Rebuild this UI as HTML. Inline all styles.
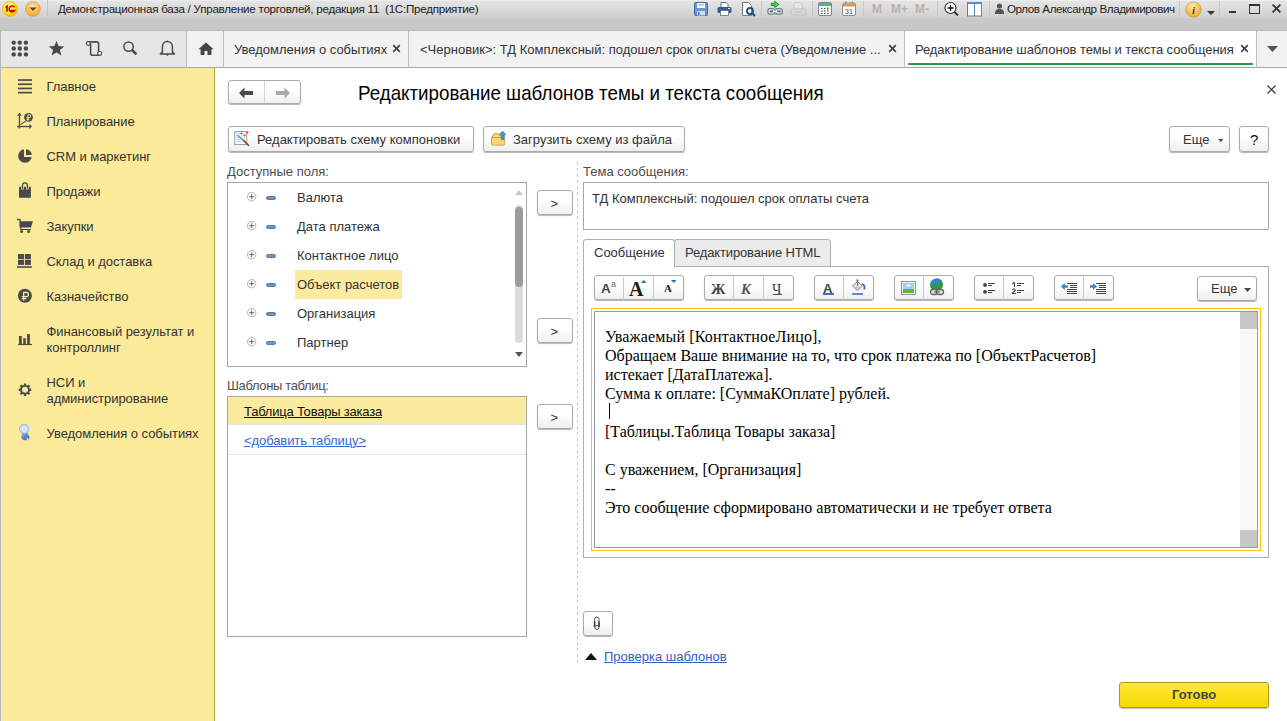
<!DOCTYPE html>
<html><head><meta charset="utf-8">
<style>
*{box-sizing:border-box;margin:0;padding:0}
html,body{width:1287px;height:721px;overflow:hidden;background:#fff;font-family:"Liberation Sans",sans-serif;font-size:13px;color:#333}
div,span,svg{position:absolute}
.t{white-space:nowrap;line-height:1}
#title{left:0;top:0;width:1287px;height:18px;background:linear-gradient(#f0f0f0 0,#e4e4e4 1.5px,#d0d0d0 18px)}
#strip{left:0;top:18px;width:1287px;height:13px;background:linear-gradient(#c9c9c9,#c7c7c7 11.5px,#bcbcbc 12px)}
#tb{left:0;top:31px;width:1287px;height:37px;background:#f2f2f2;border-bottom:1px solid #a8a8a8}
#tbl{left:0;top:31px;width:187px;height:36px;background:#e6e6e6;border-left:1px solid #b8b8b8}
#side{left:0;top:68px;width:215px;height:653px;background:#fbea9a;border-right:1px solid #bfa735;border-left:1px solid #b8b8b8}
.vs{width:1px;background:#b4b4b4}
.menu{left:46.5px;font-size:13px;color:#333;white-space:nowrap;line-height:16px;letter-spacing:-0.05px;margin-top:-1px}
.btn{border:1px solid #ababab;border-radius:3px;background:linear-gradient(#fff 40%,#efefef);box-shadow:0 1px 1px rgba(0,0,0,.3)}
.lbl{font-size:13px;color:#4d4d4d;white-space:nowrap;line-height:1}
.ed{font-family:"Liberation Serif",serif;font-size:16px;color:#000;white-space:nowrap;line-height:19px}
</style></head><body>
<!-- title bar -->
<div id="title"></div>
<div id="strip"></div>
<div id="tb"></div>
<div id="tbl"></div>
<div id="side"></div>
<!-- TITLE BAR CONTENT -->
<svg style="left:2px;top:1px" width="16" height="16" viewBox="0 0 16 16"><defs><radialGradient id="gy" cx="40%" cy="35%" r="70%"><stop offset="0" stop-color="#fff7a0"/><stop offset=".6" stop-color="#ffe01a"/><stop offset="1" stop-color="#f0b800"/></radialGradient></defs><circle cx="8" cy="8" r="7.5" fill="url(#gy)" stroke="#d9b200" stroke-width=".6"/><path d="M3.5 6.2l1.6-1v5.6" stroke="#e00000" stroke-width="1.7" fill="none"/><path d="M12.6 6.2A3 3 0 1 0 12.6 9.6H8.5" stroke="#e00000" stroke-width="1.5" fill="none"/></svg>
<svg style="left:25px;top:1px" width="16" height="16" viewBox="0 0 16 16"><defs><radialGradient id="go" cx="45%" cy="30%" r="70%"><stop offset="0" stop-color="#ffe3a0"/><stop offset="1" stop-color="#f5a623"/></radialGradient></defs><circle cx="8" cy="8" r="7.3" fill="url(#go)" stroke="#c99a3a" stroke-width=".7"/><path d="M4.5 6.5h7L8 10z" fill="#5a4a30"/></svg>
<div class="vs" style="left:47px;top:0;height:17px;background:#c4c4c4"></div>
<div class="t" style="left:58px;top:2.5px;font-size:11.6px;letter-spacing:-0.25px;color:#1a1a1a">Демонстрационная база / Управление торговлей, редакция 11 &nbsp;(1С:Предприятие)</div>
<!-- save -->
<svg style="left:694px;top:2px" width="14" height="14" viewBox="0 0 14 14"><rect x=".5" y=".5" width="13" height="13" rx="1" fill="#6a9ad2" stroke="#3d6aa6"/><rect x="3" y="1" width="8" height="5" fill="#fff"/><rect x="4" y="2.5" width="6" height=".8" fill="#6b8fbf"/><rect x="3" y="9" width="8" height="4.5" fill="#cfd8e3"/><rect x="4" y="10" width="1.5" height="3" fill="#4a7bbf"/></svg>
<!-- print -->
<svg style="left:717px;top:2px" width="15" height="14" viewBox="0 0 15 14"><path d="M4 .5h5l2 2v3H4z" fill="#fff" stroke="#5c6f86"/><rect x=".5" y="5" width="14" height="6" rx="1.5" fill="#2f5f8f"/><rect x="3.5" y="8.5" width="8" height="5" fill="#fff" stroke="#5c6f86" stroke-width=".8"/><rect x="11" y="6" width="2" height="1" fill="#fff"/></svg>
<!-- preview -->
<svg style="left:741px;top:1px" width="15" height="16" viewBox="0 0 15 16"><path d="M1.5 1.5h6l3 3v10h-9z" fill="#fff" stroke="#6d7d90"/><circle cx="9" cy="10" r="3" fill="none" stroke="#1e4f7f" stroke-width="1.8"/><path d="M11 12l3 3" stroke="#1e4f7f" stroke-width="2"/></svg>
<div class="vs" style="left:761px;top:1px;height:16px;background:#c8c8c8"></div>
<!-- link green -->
<svg style="left:762px;top:0px" width="26" height="18" viewBox="762 0 26 18"><rect x="767.9" y="8.6" width="6.6" height="5.6" rx="1.8" fill="#f4f6f8" stroke="#6f7c88" stroke-width="1.3"/><rect x="775.6" y="8.6" width="6.6" height="5.6" rx="1.8" fill="#f4f6f8" stroke="#6f7c88" stroke-width="1.3"/><rect x="769.6" y="10.4" width="3.4" height="1.9" fill="#5d6872"/><rect x="777.2" y="10.4" width="3.4" height="1.9" fill="#5d6872"/><rect x="773.2" y="10.6" width="3.8" height="1.6" fill="#fff"/><path d="M771.3 3.3h3.4V1.3l4.2 3.1-4.2 3.1v-2H771.3z" fill="#22ee22" stroke="#1e7a1e" stroke-width=".8" stroke-linejoin="round"/></svg>
<!-- disabled print -->
<svg style="left:790px;top:1px" width="17" height="16" viewBox="0 0 17 16"><path d="M4 1.5h6l2.5 2.5v4H4z" fill="#e4e7ea" stroke="#c5cbd1"/><rect x="1" y="8" width="15" height="6" rx="2" fill="none" stroke="#c5cbd1" stroke-width="1.4"/><path d="M5 11h7" stroke="#c5cbd1" stroke-width="1.4"/></svg>
<div class="vs" style="left:812px;top:1px;height:16px;background:#c8c8c8"></div>
<!-- calc -->
<svg style="left:818px;top:2px" width="14" height="14" viewBox="0 0 14 14"><rect x=".5" y=".5" width="13" height="13" rx="1.5" fill="#f4f6f8" stroke="#7b8794"/><rect x="1" y="1" width="12" height="3" fill="#4fc24f"/><g fill="#555"><rect x="3" y="6" width="1.5" height="1"/><rect x="6" y="6" width="1.5" height="1"/><rect x="3" y="8.5" width="1.5" height="1"/><rect x="6" y="8.5" width="1.5" height="1"/><rect x="3" y="11" width="1.5" height="1"/><rect x="6" y="11" width="1.5" height="1"/><rect x="9" y="8.5" width="1.5" height="1"/><rect x="9" y="11" width="1.5" height="1"/></g><rect x="9" y="5.5" width="1.5" height="2" fill="#e22"/></svg>
<!-- calendar -->
<svg style="left:842px;top:1px" width="14" height="15" viewBox="0 0 14 15"><rect x=".5" y="2" width="13" height="12.5" rx="1.5" fill="#fff" stroke="#8a8f96"/><rect x="1" y="2.5" width="12" height="3" fill="#e8924a"/><rect x="3" y=".5" width="1.2" height="3" fill="#8a8f96"/><rect x="9.8" y=".5" width="1.2" height="3" fill="#8a8f96"/><text x="7" y="12.8" font-size="7" text-anchor="middle" font-family="Liberation Sans" fill="#444">31</text></svg>
<div class="vs" style="left:863px;top:1px;height:16px;background:#c8c8c8"></div>
<div class="t" style="left:872px;top:3px;font-size:12px;font-weight:bold;color:#bcb0a4">M</div>
<div class="t" style="left:891px;top:3px;font-size:12px;font-weight:bold;color:#bcb0a4">M+</div>
<div class="t" style="left:915px;top:3px;font-size:12px;font-weight:bold;color:#bcb0a4">M-</div>
<div class="vs" style="left:937px;top:1px;height:16px;background:#c8c8c8"></div>
<!-- zoom -->
<svg style="left:944px;top:1px" width="15" height="16" viewBox="0 0 15 16"><circle cx="6.5" cy="7" r="5.5" fill="#fff" stroke="#333" stroke-width="1.2"/><path d="M6.5 4v6M3.5 7h6" stroke="#111" stroke-width="1.3"/><path d="M10.5 11l3.5 3.5" stroke="#333" stroke-width="1.8"/></svg>
<!-- panel -->
<svg style="left:967px;top:1px" width="15" height="16" viewBox="0 0 15 16"><rect x=".5" y="1.5" width="14" height="13.5" fill="#fff" stroke="#5a7fae"/><rect x="1" y="1" width="13" height="2" fill="#4a90e2"/><path d="M7.5 3v12" stroke="#5a7fae"/></svg>
<div class="vs" style="left:989px;top:1px;height:16px;background:#c8c8c8"></div>
<svg style="left:995px;top:3px" width="9" height="11" viewBox="0 0 9 11"><circle cx="4.5" cy="3" r="2.6" fill="#555"/><path d="M0 11c0-4 1.5-5 4.5-5s4.5 1 4.5 5z" fill="#555"/></svg>
<div class="t" style="left:1007px;top:2.5px;font-size:11.6px;letter-spacing:-0.41px;color:#222">Орлов Александр Владимирович</div>
<div class="vs" style="left:1179px;top:1px;height:16px;background:#c8c8c8"></div>
<svg style="left:1184.5px;top:0.5px" width="17" height="17" viewBox="0 0 17 17"><defs><radialGradient id="gi" cx="45%" cy="30%" r="70%"><stop offset="0" stop-color="#ffe9a8"/><stop offset="1" stop-color="#f0a928"/></radialGradient></defs><circle cx="8.5" cy="8.5" r="7.7" fill="url(#gi)" stroke="#c89a3e" stroke-width=".7"/><text x="8.5" y="13" font-size="11" font-style="italic" font-weight="bold" text-anchor="middle" font-family="Liberation Serif" fill="#444">i</text></svg>
<svg style="left:1207px;top:11px" width="8" height="4" viewBox="0 0 8 4"><path d="M0 0h8L4 4z" fill="#333"/></svg>
<div class="vs" style="left:1219px;top:1px;height:16px;background:#c8c8c8"></div>
<div style="left:1229px;top:11px;width:7px;height:2px;background:#333"></div>
<div style="left:1249px;top:4px;width:11px;height:10px;border:1.3px solid #333;border-top-width:2.2px"></div>
<svg style="left:1272px;top:4px" width="9" height="9" viewBox="0 0 9 9"><path d="M.6 .6l7.8 7.8M8.4 .6L.6 8.4" stroke="#333" stroke-width="1.8"/></svg>
<!-- TOOLBAR ROW -->
<svg style="left:11px;top:40px" width="18" height="17" viewBox="0 0 18 17"><g fill="#4a4a4a"><circle cx="2.7" cy="2.6" r="2.2"/><circle cx="8.8" cy="2.6" r="2.2"/><circle cx="14.9" cy="2.6" r="2.2"/><circle cx="2.7" cy="8.5" r="2.2"/><circle cx="8.8" cy="8.5" r="2.2"/><circle cx="14.9" cy="8.5" r="2.2"/><circle cx="2.7" cy="14.4" r="2.2"/><circle cx="8.8" cy="14.4" r="2.2"/><circle cx="14.9" cy="14.4" r="2.2"/></g></svg>
<svg style="left:48px;top:40px" width="17" height="17" viewBox="0 0 17 17"><path d="M8.5 .8l2.1 5.3 5.7.3-4.4 3.6 1.5 5.6-4.9-3.2-4.9 3.2 1.5-5.6L.7 6.4l5.7-.3z" fill="#4a4a4a"/></svg>
<svg style="left:80px;top:36px" width="26" height="26" viewBox="80 36 26 26"><path d="M88.3 41.9H96.6a2 2 0 0 1 2 2V53.4M90.6 43.5V53.2a2 2 0 0 0 2 2H99.6" fill="none" stroke="#4a4a4a" stroke-width="1.6"/><circle cx="88.3" cy="43.5" r="1.9" fill="#fff" stroke="#4a4a4a" stroke-width="1.2"/><circle cx="99.6" cy="53.4" r="1.9" fill="#fff" stroke="#4a4a4a" stroke-width="1.2"/></svg>
<svg style="left:118px;top:38px" width="24" height="22" viewBox="118 38 24 22"><circle cx="128.6" cy="46.6" r="4.7" fill="none" stroke="#4a4a4a" stroke-width="1.5"/><path d="M132.2 50.2l4.2 4.2" stroke="#4a4a4a" stroke-width="2.6"/></svg>
<svg style="left:156px;top:38px" width="22" height="22" viewBox="156 38 22 22"><path d="M167.4 41.6c-3 0-5 2.3-5 5.3v5.2l-2 1.8h14l-2-1.8v-5.2c0-3-2-5.3-5-5.3z" fill="none" stroke="#4a4a4a" stroke-width="1.5" stroke-linejoin="round"/><path d="M166.3 41.8l1.1-1.5 1.1 1.5z" fill="#4a4a4a"/><path d="M165.7 54.6h3.4l-1.7 1.5z" fill="#4a4a4a"/></svg>
<div class="vs" style="left:186px;top:31px;height:36px;background:#c0c0c0"></div>
<svg style="left:198px;top:42px" width="16" height="13" viewBox="0 0 16 13"><path d="M8 .5L.3 7.3h2.3V13h3.9V9h3V13h3.9V7.3h2.3z" fill="#444"/></svg>
<div class="vs" style="left:223px;top:31px;height:36px;background:#c0c0c0"></div>
<div class="t" style="left:234px;top:43px;font-size:13px;color:#333">Уведомления о событиях</div>
<svg style="left:392px;top:44px" width="9" height="9" viewBox="0 0 9 9"><path d="M1.2 1.2l6.6 6.6M7.8 1.2L1.2 7.8" stroke="#444" stroke-width="1.7"/></svg>
<div class="vs" style="left:408px;top:31px;height:36px;background:#c0c0c0"></div>
<div class="t" style="left:420px;top:43px;font-size:13px;color:#333">&lt;Черновик&gt;: ТД Комплексный: подошел срок оплаты счета (Уведомление ...</div>
<svg style="left:888px;top:44px" width="9" height="9" viewBox="0 0 9 9"><path d="M1.2 1.2l6.6 6.6M7.8 1.2L1.2 7.8" stroke="#444" stroke-width="1.7"/></svg>
<div class="vs" style="left:904px;top:31px;height:36px;background:#c0c0c0"></div>
<div style="left:905px;top:31px;width:351px;height:36px;background:#fff"></div>
<div class="t" style="left:915px;top:43px;font-size:13px;letter-spacing:-0.087px;color:#333">Редактирование шаблонов темы и текста сообщения</div>
<svg style="left:1240px;top:44px" width="9" height="9" viewBox="0 0 9 9"><path d="M1.2 1.2l6.6 6.6M7.8 1.2L1.2 7.8" stroke="#444" stroke-width="1.7"/></svg>
<div style="left:908px;top:63px;width:345px;height:2px;background:#2c9a4a"></div>
<div class="vs" style="left:1256px;top:31px;height:36px;background:#c0c0c0"></div>
<svg style="left:1267px;top:46px" width="11" height="6" viewBox="0 0 11 6"><path d="M0 0h11L5.5 6z" fill="#555"/></svg>
<!-- SIDEBAR -->
<svg style="left:18px;top:79px" width="15" height="15" viewBox="0 0 15 15"><g fill="#4a4a4a"><rect x="0" y=".2" width="14" height="1.7"/><rect x="0" y="4.4" width="14" height="1.7"/><rect x="0" y="8.6" width="14" height="1.7"/><rect x="0" y="12.8" width="14" height="1.7"/></g></svg>
<div class="menu t" style="top:80px">Главное</div>
<svg style="left:14px;top:110px" width="22" height="22" viewBox="14 110 22 22"><g fill="#4a4a4a"><rect x="18.8" y="115" width="1.3" height="13.5"/><rect x="17" y="125.9" width="13" height="1.3"/><path d="M19.45 112.8l2.4 3h-4.8z"/><path d="M32.1 126.55l-2.8-2.5v5z"/><circle cx="28.5" cy="117.3" r="4.4"/></g><path d="M20.5 124.3h1v-.8h1v-.7h1v-.6h1.2v-.5h1.3" fill="none" stroke="#4a4a4a" stroke-width=".9"/><path d="M27.9 121V114.6h1.4a1.5 1.5 0 0 1 0 3H26.5M26.5 119.3h2.8" fill="none" stroke="#fbea9a" stroke-width="1"/></svg>
<div class="menu t" style="top:115px">Планирование</div>
<svg style="left:17px;top:148px" width="16" height="16" viewBox="0 0 16 16"><path d="M7 1.3A6.8 6.8 0 1 0 14.7 9H7z" fill="#4a4a4a"/><path d="M9 1.2v5.8h5.8A6.2 6.2 0 0 0 9 1.2z" fill="#4a4a4a"/></svg>
<div class="menu t" style="top:150px">CRM и маркетинг</div>
<svg style="left:14px;top:178px" width="22" height="22" viewBox="14 178 22 22"><path d="M19 186.8H21V188.4a1.4 1.4 0 0 0 2.8 0V186.8H26V188.4a1.4 1.4 0 0 0 2.8 0V186.8H30.9V197.8H19z" fill="#4a4a4a"/><path d="M22.4 189.2V185.4a2.5 2.5 0 0 1 5 0V189.2" fill="none" stroke="#4a4a4a" stroke-width="1.3"/></svg>
<div class="menu t" style="top:185px">Продажи</div>
<svg style="left:14px;top:214px" width="22" height="22" viewBox="14 214 22 22"><g fill="#4a4a4a"><rect x="17" y="218.9" width="3.4" height="1.3"/><path d="M19.4 218.9h1.1l.2 2.4H32.9l-1.9 6.2H19.5z"/><path d="M20.2 227.2h1.2v1.7h9.6v1.2H20.2z"/><circle cx="21.6" cy="231.4" r="1.5"/><circle cx="28.6" cy="231.4" r="1.5"/></g></svg>
<div class="menu t" style="top:220px">Закупки</div>
<svg style="left:14px;top:250px" width="22" height="22" viewBox="14 250 22 22"><g fill="#4a4a4a"><rect x="18" y="254" width="6" height="5.1"/><rect x="24.9" y="254" width="6" height="5.1"/><rect x="18" y="259.8" width="6" height="5.1"/><rect x="24.9" y="259.8" width="6" height="5.1"/><rect x="17.1" y="266.2" width="14.7" height="1.6"/></g></svg>
<div class="menu t" style="top:255px">Склад и доставка</div>
<svg style="left:14px;top:285px" width="22" height="22" viewBox="14 285 22 22"><circle cx="24.9" cy="295.8" r="7" fill="#4a4a4a"/><path d="M23.7 300.6V292.3h2.6a2.15 2.15 0 0 1 0 4.3H21.8M21.8 298.6h4.6" stroke="#fbea9a" stroke-width="1.3" fill="none"/></svg>
<div class="menu t" style="top:290px">Казначейство</div>
<svg style="left:14px;top:328px" width="22" height="22" viewBox="14 328 22 22"><g fill="#4a4a4a"><rect x="19" y="336" width="2.8" height="8.5"/><rect x="23.2" y="338.2" width="2.6" height="6.3"/><rect x="27.1" y="334.1" width="2.8" height="10.4"/><rect x="18" y="343.9" width="14" height="1.2"/></g></svg>
<div class="menu" style="top:325px">Финансовый результат и<br>контроллинг</div>
<svg style="left:14px;top:379px" width="22" height="22" viewBox="14 379 22 22"><g fill="#4a4a4a" transform="translate(25 389.8)"><rect x="-1.1" y="-6.3" width="2.2" height="12.6"/><rect x="-1.1" y="-6.3" width="2.2" height="12.6" transform="rotate(45)"/><rect x="-1.1" y="-6.3" width="2.2" height="12.6" transform="rotate(90)"/><rect x="-1.1" y="-6.3" width="2.2" height="12.6" transform="rotate(135)"/><circle r="4.9"/></g><circle cx="25" cy="389.8" r="3" fill="#fbea9a"/></svg>
<div class="menu" style="top:376px">НСИ и<br>администрирование</div>
<svg style="left:14px;top:422px" width="22" height="22" viewBox="14 422 22 22"><defs><linearGradient id="nb" x1="0" y1="0" x2="1" y2="1"><stop offset="0" stop-color="#8fb2e8"/><stop offset="1" stop-color="#2f5fb0"/></linearGradient></defs><path d="M22 432.5c1.5-.5 4-.5 5.5 0 .5 2 1 3 2 4.5.3 1.5-1 3.3-4 3.3s-4.5-1.5-4.3-3c.6-1.5.8-3 .8-4.8z" fill="url(#nb)"/><circle cx="27.5" cy="439" r=".9" fill="#fff"/><circle cx="24.1" cy="429" r="4.7" fill="#c3d6f2" stroke="#94b3e0" stroke-width=".8"/><circle cx="24.3" cy="429" r="2.1" fill="none" stroke="#fff" stroke-width="1"/></svg>
<div class="menu t" style="top:427px">Уведомления о событиях</div>
<!-- MAIN HEADER -->
<div class="btn" style="left:228px;top:80px;width:73px;height:24px"></div>
<div style="left:264px;top:81px;width:1px;height:22px;background:#d4d4d4"></div>
<svg style="left:239px;top:86.5px" width="15" height="12" viewBox="0 0 15 12"><path d="M0 6L5.5 .5v3.6H14v3.8H5.5v3.6z" fill="#4a4a4a"/></svg>
<svg style="left:275px;top:86.5px" width="15" height="12" viewBox="0 0 15 12"><path d="M15 6L9.5 .5v3.6H1v3.8h8.5v3.6z" fill="#aaa"/></svg>
<div class="t" style="left:358px;top:82.5px;font-size:20.3px;letter-spacing:0px;color:#000;transform:scaleX(0.925);transform-origin:0 0">Редактирование шаблонов темы и текста сообщения</div>
<svg style="left:1267px;top:85px" width="9" height="9" viewBox="0 0 9 9"><path d="M.5 .5l8 8M8.5 .5l-8 8" stroke="#333" stroke-width="1.2"/></svg>
<!-- command bar -->
<div class="btn" style="left:228px;top:126px;width:246px;height:26px"></div>
<svg style="left:230px;top:126px" width="30" height="26" viewBox="230 126 30 26"><rect x="234.7" y="131.5" width="12" height="13" fill="#f6f8fb" stroke="#8ea2b8" stroke-width="1"/><path d="M236.3 133.5h4M236.3 135.5h3M236.3 137.5h2.5M236.3 139.5h4M236.3 141.5h4.5" stroke="#b5c2d0" stroke-width=".9"/><path d="M238.2 135.8l5.3 4.6" stroke="#4aa6e8" stroke-width="1.7" stroke-linecap="round"/><path d="M243.3 140.2l5.7 5.6" stroke="#7f5a10" stroke-width="1.7"/><path d="M241.6 131.8l.55 1.15 1.15.55-1.15.55-.55 1.15-.55-1.15-1.15-.55 1.15-.55z" fill="#f04a1a"/><path d="M244.5 133.8l.55 1.15 1.15.55-1.15.55-.55 1.15-.55-1.15-1.15-.55 1.15-.55z" fill="#f04a1a"/><path d="M247.5 130.8l.55 1.15 1.15.55-1.15.55-.55 1.15-.55-1.15-1.15-.55 1.15-.55z" fill="#f04a1a"/></svg>
<div class="t" style="left:257px;top:133px;font-size:13px;color:#333">Редактировать схему компоновки</div>
<div class="btn" style="left:483px;top:126px;width:202px;height:26px"></div>
<svg style="left:486px;top:126px" width="26" height="26" viewBox="486 126 26 26"><path d="M491.6 137.3l2.6-3.6h4.3l1.2 1.6h4.6v9c0 .5-.3.8-.8.8h-11.1c-.5 0-.8-.3-.8-.8z" fill="#f8d878" stroke="#cf963a" stroke-width="1"/><path d="M491.6 137.6h12.7" stroke="#cf963a" stroke-width="1"/><path d="M492.2 138.1h11.6v6.3h-11.6z" fill="#f7d67a"/><path d="M502.6 131l3.3 3.7h-1.9v4.8h-2.8v-4.8h-1.9z" fill="#2f9be0" stroke="#1a78c0" stroke-width=".6"/></svg>
<div class="t" style="left:513px;top:133px;font-size:13px;color:#333">Загрузить схему из файла</div>
<div class="btn" style="left:1169px;top:126px;width:61px;height:26px"></div>
<div class="t" style="left:1183px;top:133px;font-size:13px;color:#333">Еще</div>
<svg style="left:1218px;top:139px" width="6" height="3" viewBox="0 0 6 3"><path d="M0 0h5.5L2.75 3z" fill="#444"/></svg>
<div class="btn" style="left:1239px;top:126px;width:30px;height:26px"></div>
<div class="t" style="left:1250px;top:132px;font-size:15px;color:#111">?</div>
<!-- left column -->
<div class="lbl" style="left:227px;top:165px">Доступные поля:</div>
<div style="left:227px;top:182px;width:300px;height:185px;border:1px solid #a6a6a6;background:#fff"></div>
<div style="left:295px;top:270px;width:107px;height:29px;background:#fbeb9e"></div>
<svg style="left:247px;top:192px" width="10" height="10" viewBox="0 0 10 10"><circle cx="4.7" cy="4.7" r="4.2" fill="#fff" stroke="#a8a8a8" stroke-width=".9"/><path d="M4.7 2.2v5M2.2 4.7h5" stroke="#666" stroke-width="1"/></svg>
<div style="left:266px;top:196px;width:10px;height:4px;border-radius:2px;background:#6f95b8;border:1px solid #5a7fa3"></div>
<div class="t" style="left:297px;top:191px;font-size:13px;color:#333">Валюта</div>
<svg style="left:247px;top:221px" width="10" height="10" viewBox="0 0 10 10"><circle cx="4.7" cy="4.7" r="4.2" fill="#fff" stroke="#a8a8a8" stroke-width=".9"/><path d="M4.7 2.2v5M2.2 4.7h5" stroke="#666" stroke-width="1"/></svg>
<div style="left:266px;top:225px;width:10px;height:4px;border-radius:2px;background:#6f95b8;border:1px solid #5a7fa3"></div>
<div class="t" style="left:297px;top:220px;font-size:13px;color:#333">Дата платежа</div>
<svg style="left:247px;top:250px" width="10" height="10" viewBox="0 0 10 10"><circle cx="4.7" cy="4.7" r="4.2" fill="#fff" stroke="#a8a8a8" stroke-width=".9"/><path d="M4.7 2.2v5M2.2 4.7h5" stroke="#666" stroke-width="1"/></svg>
<div style="left:266px;top:254px;width:10px;height:4px;border-radius:2px;background:#6f95b8;border:1px solid #5a7fa3"></div>
<div class="t" style="left:297px;top:249px;font-size:13px;color:#333">Контактное лицо</div>
<svg style="left:247px;top:279px" width="10" height="10" viewBox="0 0 10 10"><circle cx="4.7" cy="4.7" r="4.2" fill="#fff" stroke="#a8a8a8" stroke-width=".9"/><path d="M4.7 2.2v5M2.2 4.7h5" stroke="#666" stroke-width="1"/></svg>
<div style="left:266px;top:283px;width:10px;height:4px;border-radius:2px;background:#6f95b8;border:1px solid #5a7fa3"></div>
<div class="t" style="left:297px;top:278px;font-size:13px;color:#333">Объект расчетов</div>
<svg style="left:247px;top:308px" width="10" height="10" viewBox="0 0 10 10"><circle cx="4.7" cy="4.7" r="4.2" fill="#fff" stroke="#a8a8a8" stroke-width=".9"/><path d="M4.7 2.2v5M2.2 4.7h5" stroke="#666" stroke-width="1"/></svg>
<div style="left:266px;top:312px;width:10px;height:4px;border-radius:2px;background:#6f95b8;border:1px solid #5a7fa3"></div>
<div class="t" style="left:297px;top:307px;font-size:13px;color:#333">Организация</div>
<svg style="left:247px;top:337px" width="10" height="10" viewBox="0 0 10 10"><circle cx="4.7" cy="4.7" r="4.2" fill="#fff" stroke="#a8a8a8" stroke-width=".9"/><path d="M4.7 2.2v5M2.2 4.7h5" stroke="#666" stroke-width="1"/></svg>
<div style="left:266px;top:341px;width:10px;height:4px;border-radius:2px;background:#6f95b8;border:1px solid #5a7fa3"></div>
<div class="t" style="left:297px;top:336px;font-size:13px;color:#333">Партнер</div>
<!-- tree scrollbar -->
<svg style="left:515px;top:190px" width="8" height="6" viewBox="0 0 8 6"><path d="M0 5h8L4 0z" fill="#c8c8c8"/></svg>
<div style="left:515px;top:205px;width:8px;height:138px;border-radius:4px;background:#dcdcdc"></div>
<div style="left:515px;top:207px;width:8px;height:80px;border-radius:4px;background:#9b9b9b"></div>
<svg style="left:515px;top:352px" width="8" height="6" viewBox="0 0 8 6"><path d="M0 0h8L4 5z" fill="#555"/></svg>
<!-- > buttons -->
<div class="btn" style="left:537px;top:190px;width:36px;height:25px"></div>
<div class="t" style="left:550.5px;top:196.5px;font-size:13px;color:#333">&gt;</div>
<div class="btn" style="left:537px;top:318px;width:36px;height:25px"></div>
<div class="t" style="left:550.5px;top:324.5px;font-size:13px;color:#333">&gt;</div>
<div class="btn" style="left:537px;top:404px;width:36px;height:25px"></div>
<div class="t" style="left:550.5px;top:410.5px;font-size:13px;color:#333">&gt;</div>
<!-- tables -->
<div class="lbl" style="left:227px;top:378.5px;letter-spacing:-0.36px">Шаблоны таблиц:</div>
<div style="left:227px;top:396px;width:300px;height:241px;border:1px solid #a6a6a6;background:#fff"></div>
<div style="left:228px;top:397px;width:298px;height:27px;background:#fbeb9e"></div>
<div style="left:228px;top:424px;width:298px;height:1px;background:#e4e4e4"></div>
<div style="left:228px;top:454px;width:298px;height:1px;background:#e4e4e4"></div>
<div class="t" style="left:244px;top:405px;font-size:13px;letter-spacing:-0.21px;color:#111;text-decoration:underline">Таблица Товары заказа</div>
<div class="t" style="left:244px;top:434px;font-size:13px;letter-spacing:-0.09px;color:#3468d4;text-decoration:underline">&lt;добавить таблицу&gt;</div>
<!-- dashed separator -->
<div style="left:577px;top:162px;width:1px;height:502px;background:repeating-linear-gradient(#c8c8c8 0 3px,transparent 3px 6px)"></div>
<!-- right column -->
<div class="lbl" style="left:583px;top:165px">Тема сообщения:</div>
<div style="left:583px;top:182px;width:686px;height:48px;border:1px solid #a6a6a6;background:#fff"></div>
<div class="t" style="left:592px;top:192px;font-size:13px;color:#333">ТД Комплексный: подошел срок оплаты счета</div>
<!-- tabs -->
<div style="left:583px;top:266px;width:686px;height:292px;border:1px solid #b0b0b0;background:#fff"></div>
<div style="left:674px;top:239px;width:157px;height:28px;border:1px solid #b0b0b0;border-radius:3px 3px 0 0;background:#ececec"></div>
<div style="left:583px;top:239px;width:92px;height:28px;border:1px solid #b0b0b0;border-bottom:none;border-radius:3px 3px 0 0;background:#fff"></div>
<div class="t" style="left:594px;top:246px;font-size:13px;color:#333">Сообщение</div>
<div class="t" style="left:685px;top:246px;font-size:13px;letter-spacing:-0.14px;color:#333">Редактирование HTML</div>
<!-- format toolbar -->
<div class="btn" style="left:594px;top:275px;width:90px;height:25px"></div>
<div style="left:623px;top:277px;width:1px;height:23px;background:#c8c8c8"></div>
<div style="left:653px;top:277px;width:1px;height:23px;background:#c8c8c8"></div>
<div class="btn" style="left:704px;top:275px;width:90px;height:25px"></div>
<div style="left:733px;top:277px;width:1px;height:23px;background:#c8c8c8"></div>
<div style="left:763px;top:277px;width:1px;height:23px;background:#c8c8c8"></div>
<div class="btn" style="left:814px;top:275px;width:60px;height:25px"></div>
<div style="left:843px;top:277px;width:1px;height:23px;background:#c8c8c8"></div>
<div class="btn" style="left:894px;top:275px;width:60px;height:25px"></div>
<div style="left:923px;top:277px;width:1px;height:23px;background:#c8c8c8"></div>
<div class="btn" style="left:974px;top:275px;width:60px;height:25px"></div>
<div style="left:1003px;top:277px;width:1px;height:23px;background:#c8c8c8"></div>
<div class="btn" style="left:1054px;top:275px;width:60px;height:25px"></div>
<div style="left:1083px;top:277px;width:1px;height:23px;background:#c8c8c8"></div>
<div class="btn" style="left:1197px;top:276px;width:60px;height:25px"></div>
<div class="t" style="left:1211px;top:282px;font-size:13px;color:#333">Еще</div>
<svg style="left:1244px;top:288px" width="7" height="4" viewBox="0 0 7 4"><path d="M0 0h7L3.5 4z" fill="#444"/></svg>
<!-- toolbar icons -->
<div class="t" style="left:601px;top:282px;font-size:13.5px;font-weight:bold;color:#444">A</div>
<div class="t" style="left:611px;top:280px;font-size:9px;color:#666">a</div>
<div class="t" style="left:629px;top:279px;font-size:20px;font-weight:bold;font-family:'Liberation Serif',serif;color:#1a1a1a">A</div>
<svg style="left:641px;top:280px" width="6" height="3" viewBox="0 0 6 3"><path d="M0 3h5.5L2.75 0z" fill="#2a6f98"/></svg>
<div class="t" style="left:664px;top:283px;font-size:11px;font-weight:bold;font-family:'Liberation Serif',serif;color:#1a1a1a">A</div>
<svg style="left:671px;top:280px" width="6" height="3" viewBox="0 0 6 3"><path d="M0 0h5.5L2.75 3z" fill="#2a6f98"/></svg>
<div class="t" style="left:711px;top:282px;font-size:14.5px;font-weight:bold;font-family:'Liberation Serif',serif;color:#444">Ж</div>
<div class="t" style="left:741px;top:282px;font-size:14.5px;font-style:italic;font-weight:bold;font-family:'Liberation Serif',serif;color:#555">К</div>
<div class="t" style="left:772px;top:282px;font-size:14.5px;font-family:'Liberation Serif',serif;color:#444">Ч</div>
<div style="left:773px;top:294px;width:9px;height:1px;background:#555"></div>
<div class="t" style="left:823px;top:282px;font-size:13px;font-weight:bold;color:#444">A</div>
<div style="left:823px;top:293px;width:11px;height:2px;background:#3a6fd0"></div>
<svg style="left:851px;top:279px" width="16" height="17" viewBox="0 0 16 17"><path d="M1.5 7l5-4.5 5 4.5-5 4.5z" fill="#e8e8e8" stroke="#888" stroke-width="1"/><path d="M2.5 7.5l4 3.5 4-3.5z" fill="#c8c8c8"/><path d="M6.5 1v6" stroke="#a07830" stroke-width="1.1"/><circle cx="6.5" cy="1.3" r="1" fill="none" stroke="#777" stroke-width=".7"/><path d="M11 5c2.5.8 3 3 2.2 5.5" stroke="#2a6fd6" stroke-width="1.8" fill="none"/><rect x="1" y="14.2" width="11" height="1.6" fill="#3a6fd0"/></svg>
<svg style="left:901px;top:281px" width="16" height="15" viewBox="0 0 16 15"><rect x=".5" y=".5" width="14" height="13" fill="#eef2f6" stroke="#8797a8"/><rect x="2" y="2" width="11" height="10" fill="#9fd2f2"/><rect x="2" y="8" width="11" height="4" fill="#6cae3a"/><ellipse cx="7.5" cy="4.5" rx="2.5" ry="1" fill="#fff"/></svg>
<svg style="left:929px;top:278px" width="18" height="19" viewBox="0 0 18 19"><circle cx="7.5" cy="7" r="6.5" fill="#2e9a3e"/><path d="M1.5 5.5a6.5 6.5 0 0 1 12-1.5c-2 .5-3 2-5 1.5s-3 1-4 2z" fill="#3a7fd0"/><rect x="1.5" y="11.5" width="7" height="5" rx="2.5" fill="#e8e8e8" stroke="#666" stroke-width="1.3"/><rect x="7.5" y="11.5" width="7" height="5" rx="2.5" fill="#e8e8e8" stroke="#666" stroke-width="1.3"/><path d="M5 14h6" stroke="#666" stroke-width="1.3"/></svg>
<svg style="left:975px;top:275px" width="140" height="27" viewBox="975 275 140 27">
<g fill="#444"><circle cx="985" cy="285" r="1.9"/><circle cx="985" cy="291.8" r="1.9"/>
<rect x="988" y="283" width="7" height="1"/><rect x="988" y="285" width="4" height="1"/><rect x="988" y="290" width="7" height="1"/><rect x="988" y="292" width="4" height="1"/>
<rect x="1017" y="283" width="7" height="1"/><rect x="1017" y="285" width="4" height="1"/><rect x="1017" y="290" width="7" height="1"/><rect x="1017" y="292" width="4" height="1"/>
<path d="M1012.2 283.3l1.8-1.3h1v4.9h-1.1v-3.5l-1.7 1z"/>
<path d="M1012 294v-.9c.3-.8 1-1.3 1.8-1.8.6-.4.9-.7.9-1.1 0-.4-.3-.7-.8-.7s-.8.3-.9.8l-1-.1c.1-1 .8-1.6 1.9-1.6 1.1 0 1.9.6 1.9 1.6 0 .7-.4 1.2-1.2 1.7-.6.4-1 .7-1.2 1.1h2.5v1z"/>
<rect x="1067" y="283" width="10" height="1"/><rect x="1070" y="285" width="7" height="1"/><rect x="1070" y="287" width="7" height="1"/><rect x="1067" y="289" width="10" height="1"/><rect x="1067" y="291" width="10" height="1"/><rect x="1067" y="293" width="10" height="1"/>
<rect x="1096" y="283" width="10" height="1"/><rect x="1099" y="285" width="7" height="1"/><rect x="1099" y="287" width="7" height="1"/><rect x="1096" y="289" width="10" height="1"/><rect x="1096" y="291" width="10" height="1"/><rect x="1096" y="293" width="10" height="1"/>
</g>
<path d="M1060.8 286.5l4-3.5v2.3h3v2.4h-3v2.3z" fill="#3a86d8"/>
<path d="M1097 286.5l-4-3.5v2.3h-3v2.4h3v2.3z" fill="#3a86d8"/>
</svg>
<!-- editor -->
<div style="left:591px;top:308px;width:670px;height:243px;border:1px solid #fcc419"></div>
<div style="left:594px;top:311px;width:664px;height:237px;border:1px solid #9a9a9a;background:#fff"></div>
<div style="left:1240px;top:312px;width:17px;height:235px;background:#f8f8f8"></div>
<div style="left:1240px;top:312px;width:17px;height:17px;background:#c8c8c8"></div>
<div style="left:1240px;top:530px;width:17px;height:17px;background:#c8c8c8"></div>
<div class="ed" style="left:605px;top:327px"><span style="position:static;letter-spacing:0.16px">Уважаемый [КонтактноеЛицо],</span><br>Обращаем Ваше внимание на то, что срок платежа по [ОбъектРасчетов]<br>истекает [ДатаПлатежа].<br>Сумма к оплате: [СуммаКОплате] рублей.<br><br>[Таблицы.Таблица Товары заказа]<br><br>С уважением, [Организация]<br>--<br>Это сообщение сформировано автоматически и не требует ответа</div>
<div style="left:609px;top:403px;width:1px;height:16px;background:#000"></div>
<!-- bottom -->
<div class="btn" style="left:583px;top:611px;width:30px;height:25px"></div>
<svg style="left:590px;top:614px" width="14" height="18" viewBox="590 614 14 18"><path d="M594.6 627V619.3a2.2 2.2 0 0 1 4.4 0V627" fill="none" stroke="#555" stroke-width="1"/><path d="M594.6 621.5V627M599 621.5V627" stroke="#444" stroke-width="1.6"/><circle cx="596.8" cy="627.4" r="2" fill="#fff" stroke="#444" stroke-width="1"/></svg>
<svg style="left:585px;top:653px" width="12" height="7" viewBox="0 0 12 7"><path d="M0 7h12L6 0z" fill="#111"/></svg>
<div class="t" style="left:604px;top:650px;font-size:13px;color:#2d62c4;text-decoration:underline">Проверка шаблонов</div>
<div style="left:1119px;top:682px;width:150px;height:26px;border:1px solid #b39b10;border-radius:3px;background:linear-gradient(#ffe83c,#f7d800);box-shadow:0 1px 1px rgba(0,0,0,.25)"></div>
<div class="t" style="left:1172px;top:688px;font-size:13px;font-weight:bold;color:#444">Готово</div>
</body></html>
